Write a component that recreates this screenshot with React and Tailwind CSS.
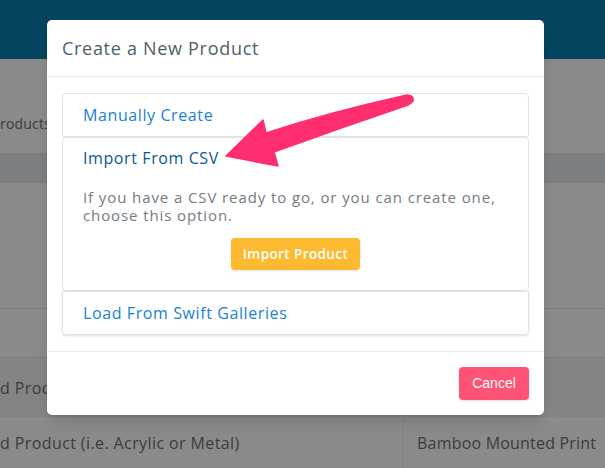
import React from 'react';

const font = { fontFamily: '"Open Sans", "Liberation Sans", sans-serif' };

// Pink annotation arrow drawn over the modal
function Arrow() {
  return (
    <svg className="absolute left-0 top-0 pointer-events-none" width="605" height="468" viewBox="0 0 605 468">
      <path
        d="M226 156 L263 120 L266 133 Q330 112 407 95 Q414 95 413 101 Q412 103 408 105 Q340 128 274 152 L278 166 Z"
        fill="#ff2e6e"
        stroke="#ff2e6e"
        strokeWidth="1.5"
        strokeLinejoin="round"
      />
    </svg>
  );
}

export default function App() {
  return (
    <div className="relative w-[605px] h-[468px] overflow-hidden bg-[#8a8a8a] text-[#3c3c3c] tracking-[0.4px]" style={font}>
      {/* Dimmed page behind the modal */}
      <div className="h-[59px] bg-[#05445f]" />
      <div className="h-[94px] pt-[52px]">
        <span className="text-[14px] leading-[22px] tracking-[0.2px]">roducts</span>
      </div>
      <div className="h-[30px] bg-[#7b7f82]" />
      <div className="h-[126px] border-b border-[#7f7f7f]" />
      <div className="h-[49px] border-b border-[#7f7f7f]" />
      <div className="h-[59px] bg-[#848484] flex items-center">
        <span className="text-[16px]">d Prod</span>
      </div>
      <div className="h-[51px] flex">
        <div className="w-[404px] border-r border-[#7f7f7f] flex items-center">
          <span className="text-[16px]">d Product (i.e. Acrylic or Metal)</span>
        </div>
        <div className="flex-1 flex items-center pl-[13px] text-[16px] tracking-[0.2px] whitespace-nowrap">Bamboo Mounted Print</div>
      </div>

      {/* Modal */}
      <div className="absolute left-[47px] top-[20px] w-[497px] bg-white rounded-[5px] shadow-lg flex flex-col">
        <div className="h-[57px] px-[15px] flex items-center border-b border-[#e9ecef]">
          <h2 className="text-[18px] text-[#4f5f6a] tracking-[0.7px]">Create a New Product</h2>
        </div>
        <div className="px-[15px] py-4 flex flex-col">
          <div className="h-[44px] border border-[#dfe3e7] rounded-t-[4px] flex items-center px-5">
            <span className="text-[16px] font-medium text-[#1782d6] tracking-[0.6px]">Manually Create</span>
          </div>
          <div className="h-[154px] border border-[#dfe3e7] rounded-[4px] px-5 pt-[8px] flex flex-col">
            <span className="text-[16px] font-medium text-[#0b5894] leading-[24px] tracking-[0.6px]">Import From CSV</span>
            <p className="mt-[18px] text-[15px] leading-[18px] text-[#737b82] tracking-[0.9px]">
              If you have a CSV ready to go, or you can create one, choose this option.
            </p>
            <div className="mt-[14px] flex justify-center">
              <button className="h-[32px] w-[129px] rounded-[4px] bg-[#fdba30] text-white text-[13.5px] font-semibold tracking-[0.4px] shadow-sm">
                Import Product
              </button>
            </div>
          </div>
          <div className="h-[44px] border border-[#dfe3e7] rounded-b-[4px] shadow-sm flex items-center px-5">
            <span className="text-[16px] font-medium text-[#1782d6] tracking-[0.6px]">Load From Swift Galleries</span>
          </div>
        </div>
        <div className="h-[64px] border-t border-[#e9ecef] flex items-center justify-end px-[15px]">
          <button
            className="h-[33px] w-[70px] rounded-[4px] bg-[#ff5376] text-white text-[14px] tracking-normal shadow-sm"
            style={{ fontFamily: '"Liberation Sans", Arial, sans-serif' }}
          >
            Cancel
          </button>
        </div>
      </div>

      <Arrow />
    </div>
  );
}
